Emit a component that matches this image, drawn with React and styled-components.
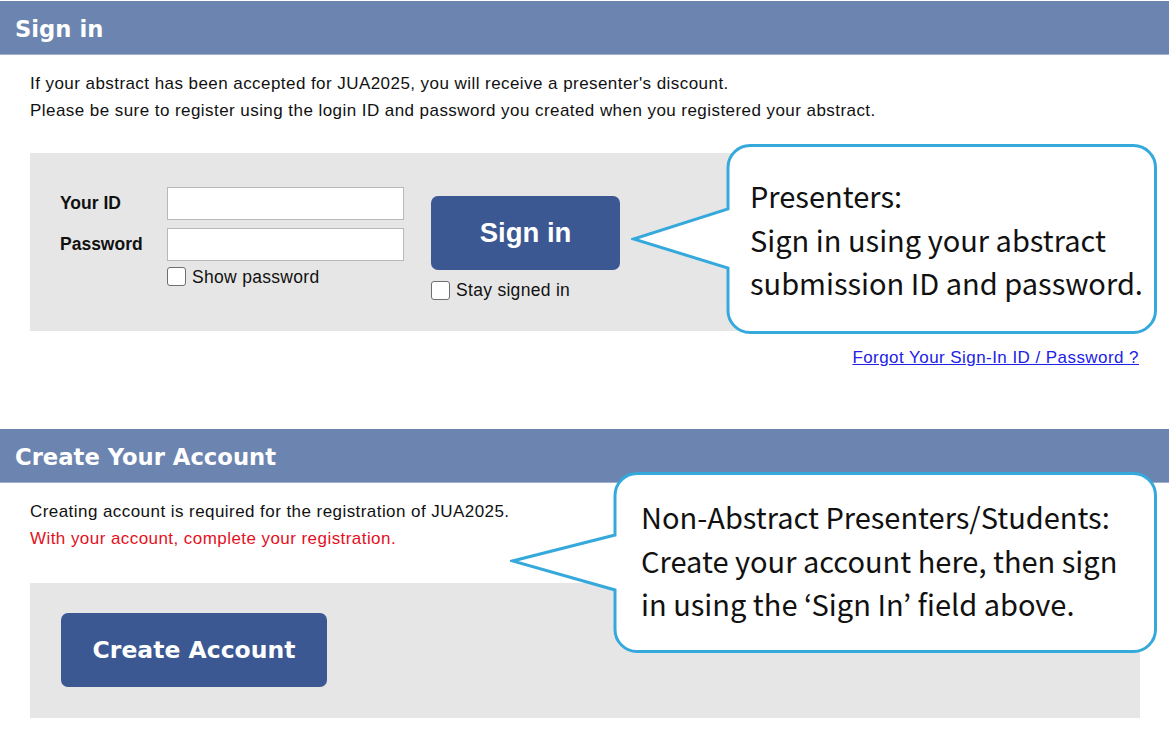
import styled, { createGlobalStyle } from 'styled-components';
import { useState } from 'react';

const GlobalStyle = createGlobalStyle`
  html, body {
    margin: 0;
    padding: 0;
    background: #fff;
  }
  body {
    font-family: "Liberation Sans", Arial, sans-serif;
    color: #111;
  }
`;

const Page = styled.div`
  position: relative;
  width: 1171px;
  height: 750px;
  padding-top: 1px;
  box-sizing: border-box;
  overflow: hidden;
`;

const SectionHeader = styled.div`
  width: 1169px;
  height: 54px;
  background: #6c84b0;
  border-bottom: 1px solid #9fb0cf;
  box-sizing: border-box;
  display: flex;
  align-items: center;
  padding: 2px 0 0 15px;
  margin-top: ${p => p.$top || 0}px;
  color: #fff;
  font-family: "DejaVu Sans", Verdana, sans-serif;
  font-weight: bold;
  font-size: 22.7px;
`;

const Notes = styled.div`
  padding-left: 30px;
  margin-top: ${p => p.$top}px;
  font-size: 17px;
  letter-spacing: 0.44px;
  line-height: 27px;
  > p {
    margin: 0;
  }
`;

const Warn = styled.p`
  color: #e3101e;
`;

const Panel = styled.div`
  margin-left: 30px;
  width: 1110px;
  height: ${p => p.$height}px;
  margin-top: ${p => p.$top}px;
  background: #e6e6e6;
  box-sizing: border-box;
  padding: ${p => p.$pad};
  display: flex;
  align-items: flex-start;
`;

const FieldGrid = styled.div`
  display: grid;
  grid-template-columns: 107px 237px;
  row-gap: 8px;
  align-items: center;
`;

const FieldLabel = styled.label`
  font-weight: bold;
  font-size: 17.5px;
`;

const TextBox = styled.input`
  width: 237px;
  height: 33px;
  box-sizing: border-box;
  border: 1px solid #b9b9b9;
  background: #fff;
  margin: 0;
  padding: 0 6px;
  font-size: 16px;
`;

const CheckRow = styled.label`
  display: flex;
  align-items: center;
  gap: 6px;
  font-size: 17.5px;
  letter-spacing: 0.3px;
  margin-top: ${p => p.$top || 0}px;
  grid-column: ${p => p.$col || 'auto'};
  > span {
    margin-top: ${p => p.$drop || 0}px;
  }
`;

const Check = styled.input.attrs({ type: 'checkbox' })`
  appearance: none;
  width: 19px;
  height: 19px;
  margin: 0;
  border: 1px solid #6f6f6f;
  border-radius: 3px;
  background: #fff;
  box-sizing: border-box;
  &:checked {
    background: #3b5893;
  }
`;

const ButtonCol = styled.div`
  margin-left: 27px;
  margin-top: 9px;
  display: flex;
  flex-direction: column;
`;

const BlueButton = styled.button`
  width: ${p => p.$w}px;
  height: 74px;
  border: none;
  border-radius: 7px;
  background: #3b5893;
  color: #fff;
  font-family: ${p => p.$verdana ? '"DejaVu Sans", Verdana, sans-serif' : '"Liberation Sans", Arial, sans-serif'};
  font-weight: bold;
  font-size: ${p => p.$size}px;
  padding: 0;
  cursor: pointer;
`;

const LinkRow = styled.div`
  width: 1139px;
  margin-top: 16px;
  text-align: right;
  font-size: 17px;
  letter-spacing: 0.44px;
  line-height: 22px;
  > a {
    color: #2121e6;
    text-decoration: underline;
  }
`;

const Bubble = styled.div`
  position: absolute;
  left: ${p => p.$x}px;
  top: ${p => p.$y}px;
  width: ${p => p.$w}px;
  height: ${p => p.$h}px;
  > svg {
    position: absolute;
    inset: 0;
  }
`;

const BubbleText = styled.div`
  position: absolute;
  left: ${p => p.$left}px;
  top: ${p => p.$top}px;
  font-family: "Noto Sans CJK JP", "Noto Sans", sans-serif;
  font-size: 29px;
  line-height: 43.5px;
  color: #111;
  white-space: nowrap;
`;

function bubblePath(w, h, pw, tipY, b0, b1) {
  const s = 1.5;
  const r = 22;
  const x0 = pw, y0 = s, x1 = w - s, y1 = h - s;
  return `M${x0 + r},${y0} H${x1 - r} A${r},${r} 0 0 1 ${x1},${y0 + r} V${y1 - r} A${r},${r} 0 0 1 ${x1 - r},${y1} H${x0 + r} A${r},${r} 0 0 1 ${x0},${y1 - r} V${b1} L${s + 1},${tipY} L${x0},${b0} V${y0 + r} A${r},${r} 0 0 1 ${x0 + r},${y0} Z`;
}

const Callout = ({ x, y, w, h, pw, tipY, b0, b1, textLeft, textTop, children }) => (
  <Bubble $x={x} $y={y} $w={w} $h={h}>
    <svg width={w} height={h} viewBox={`0 0 ${w} ${h}`}>
      <path d={bubblePath(w, h, pw, tipY, b0, b1)} fill="#fff" stroke="#36a9dc" strokeWidth="3" strokeLinejoin="miter" />
    </svg>
    <BubbleText $left={pw + textLeft} $top={textTop}>{children}</BubbleText>
  </Bubble>
);

export default function App() {
  const [showPw, setShowPw] = useState(false);
  return (
    <>
      <GlobalStyle />
      <Page>
        <SectionHeader>Sign in</SectionHeader>
        <Notes $top={15}>
          <p>If your abstract has been accepted for JUA2025, you will receive a presenter's discount.</p>
          <p>Please be sure to register using the login ID and password you created when you registered your abstract.</p>
        </Notes>
        <Panel $top={29} $height={178} $pad="34px 0 0 30px">
          <FieldGrid>
            <FieldLabel htmlFor="uid">Your ID</FieldLabel>
            <TextBox id="uid" type="text" />
            <FieldLabel htmlFor="upw">Password</FieldLabel>
            <TextBox id="upw" type={showPw ? 'text' : 'password'} />
            <CheckRow $col="2" $top={-4} $drop={2}>
              <Check checked={showPw} onChange={e => setShowPw(e.target.checked)} />
              <span>Show password</span>
            </CheckRow>
          </FieldGrid>
          <ButtonCol>
            <BlueButton $w={189} $size={27.5}>Sign in</BlueButton>
            <CheckRow $top={10} $drop={0}>
              <Check />
              <span>Stay signed in</span>
            </CheckRow>
          </ButtonCol>
        </Panel>
        <LinkRow>
          <a href="#forgot">Forgot Your Sign-In ID / Password ?</a>
        </LinkRow>
        <SectionHeader $top={60}>Create Your Account</SectionHeader>
        <Notes $top={15}>
          <p>Creating account is required for the registration of JUA2025.</p>
          <Warn>With your account, complete your registration.</Warn>
        </Notes>
        <Panel $top={31} $height={135} $pad="30px 0 0 31px">
          <BlueButton $w={266} $size={23.5} $verdana>Create Account</BlueButton>
        </Panel>

        <Callout x={631} y={144} w={526} h={190} pw={97} tipY={95} b0={65} b1={124} textLeft={22} textTop={30}>
          Presenters:<br />
          Sign in using your abstract<br />
          submission ID and password.
        </Callout>
        <Callout x={510} y={472} w={647} h={181} pw={105} tipY={89} b0={63} b1={118} textLeft={26} textTop={23}>
          Non-Abstract Presenters/Students:<br />
          Create your account here, then sign<br />
          in using the ‘Sign In’ field above.
        </Callout>
      </Page>
    </>
  );
}
